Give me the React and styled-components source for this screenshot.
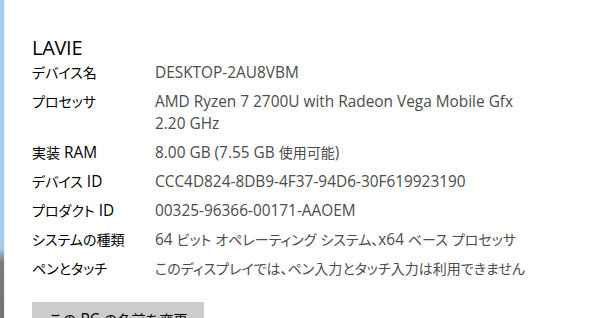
import React from "react";
import styled, { createGlobalStyle } from "styled-components";

const Global = createGlobalStyle`
  html, body { margin: 0; padding: 0; background: #ffffff; }
  body {
    font-family: "Open Sans", "Noto Sans CJK JP", sans-serif;
    font-feature-settings: "palt";
  }
`;

const Window = styled.div`
  display: flex;
  width: 600px;
  height: 318px;
  overflow: hidden;
  background: #ffffff;
`;

const Edge = styled.div`
  flex: 0 0 4px;
  background: linear-gradient(
    to bottom,
    #a3cdea 0px,
    #a3cdea 248px,
    #7b7b7b 262px,
    #737373 318px
  );
  border-right: 1px solid #e8f2fa;
`;

const Content = styled.div`
  flex: 1;
  padding: 34px 0 0 27px;
  display: flex;
  flex-direction: column;
`;

const Title = styled.div`
  font-size: 20px;
  line-height: 28px;
  color: #000000;
  letter-spacing: -0.3px;
`;

const List = styled.div`
  display: flex;
  flex-direction: column;
  gap: 7px;
`;

const Row = styled.div`
  display: grid;
  grid-template-columns: 123px 1fr;
  font-size: 15.4px;
  line-height: 22px;
`;

const Label = styled.div`
  color: #000000;
`;

const Value = styled.div`
  color: #4c4c4c;
  white-space: pre-line;
`;

const Jp = styled.span`
  font-family: "Noto Sans CJK JP", sans-serif;
  font-size: 14px;
  line-height: 1;
`;

const RenameButton = styled.button`
  margin-top: 22px;
  width: 172px;
  height: 36px;
  border: none;
  background: #cccccc;
  font-family: inherit;
  font-size: 15.4px;
  color: #000000;
  padding: 0;
  text-align: center;
  line-height: 36px;
  white-space: nowrap;
  overflow: hidden;
`;

const CJK = /([\u3000-\u30ff\u4e00-\u9fff\uff00-\uffef]+)/;

function Mixed({ text }) {
  return text
    .split(CJK)
    .filter((s) => s !== "")
    .map((s, i) => (CJK.test(s) ? <Jp key={i}>{s}</Jp> : <React.Fragment key={i}>{s}</React.Fragment>));
}

const rows = [
  ["デバイス名", "DESKTOP-2AU8VBM"],
  ["プロセッサ", "AMD Ryzen 7 2700U with Radeon Vega Mobile Gfx\n2.20 GHz"],
  ["実装 RAM", "8.00 GB (7.55 GB 使用可能)"],
  ["デバイス ID", "CCC4D824-8DB9-4F37-94D6-30F619923190"],
  ["プロダクト ID", "00325-96366-00171-AAOEM"],
  ["システムの種類", "64 ビット オペレーティング システム、x64 ベース プロセッサ"],
  ["ペンとタッチ", "このディスプレイでは、ペン入力とタッチ入力は利用できません"],
];

export default function App() {
  return (
    <>
      <Global />
      <Window>
        <Edge />
        <Content>
          <Title>LAVIE</Title>
          <List>
            {rows.map(([l, v]) => (
              <Row key={l}>
                <Label>
                  <Mixed text={l} />
                </Label>
                <Value>
                  <Mixed text={v} />
                </Value>
              </Row>
            ))}
          </List>
          <RenameButton>
            <Mixed text="この PC の名前を変更" />
          </RenameButton>
        </Content>
      </Window>
    </>
  );
}
